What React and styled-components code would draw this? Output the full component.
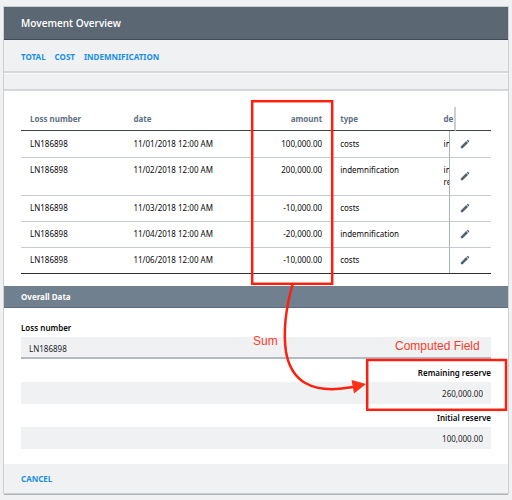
import React from "react";
import styled, { createGlobalStyle } from "styled-components";

const GlobalStyle = createGlobalStyle`
  * {
    box-sizing: border-box;
  }

  body {
    margin: 0;
    background: #f0f1f3;
    color: #08090a;
    font-family: "Noto Sans", "Open Sans", sans-serif;
    font-size: 8px;
    line-height: 12px;
  }
`;

const Page = styled.div`
  position: relative;
  padding: 7px 4px;
`;

const Card = styled.main`
  background: #ffffff;
  box-shadow: 0 0 0 1px #cdd0d3, 0 2px 0 #aeb2b5;
`;

const Header = styled.header`
  display: flex;
  align-items: center;
  height: 33px;
  padding: 0 17px;
  background: #5b6773;
  border-bottom: 1px solid #414c57;
`;

const Title = styled.h1`
  margin: 0;
  color: #ffffff;
  font-family: "Open Sans", sans-serif;
  font-size: 10px;
  font-weight: 650;
`;

const Toolbar = styled.nav`
  display: flex;
  align-items: center;
  gap: 9px;
  height: 33px;
  padding: 2px 17px 0;
  background: #f0f1f3;
  border-bottom: 2px solid #d5d8da;
`;

const Strip = styled.div`
  height: 18px;
  background: #f0f1f3;
  border-top: 1px solid #fafafa;
  border-bottom: 2px solid #d5d8da;
`;

const TextButton = styled.button`
  padding: 0;
  border: 0;
  background: none;
  color: #1a8fe3;
  font: inherit;
  font-weight: 700;
  text-transform: uppercase;
  cursor: pointer;
`;

const TableArea = styled.section`
  padding: 16px 17px 12px;
`;

const Table = styled.table`
  width: 100%;
  table-layout: fixed;
  border-collapse: separate;
  border-spacing: 0;
  border-bottom: 1px solid #2f3338;
`;

const Column = styled.col`
  width: ${(props) => props.$width};
`;

const HeadCell = styled.th`
  height: 24px;
  padding: 0 9px;
  border-bottom: 1px solid #3c4248;
  color: #5f7182;
  font-weight: 700;
  text-align: ${(props) => props.$align || "left"};
`;

const ClippedHead = styled(HeadCell)`
  padding-right: 0;
  border-right: 2px solid #cbd0d4;
  overflow: hidden;
`;

const Cell = styled.td`
  padding: 7px 9px;
  vertical-align: top;
  text-align: ${(props) => props.$align || "left"};

  tr + tr > & {
    padding-top: 6px;
    border-top: 1px solid #c5cbd1;
  }
`;

const ClippedCell = styled(Cell)`
  padding-right: 0;
  border-right: 1px solid #aab1b9;
  overflow: hidden;
  white-space: pre;
`;

const ActionCell = styled(Cell)`
  padding-left: 10px;
  padding-right: 0;
  vertical-align: middle;
`;

const EditButton = styled.button`
  display: block;
  padding: 0;
  border: 0;
  background: none;
  color: #526273;
  cursor: pointer;
`;

const SectionTitle = styled.h2`
  display: flex;
  align-items: center;
  height: 22px;
  margin: 0;
  padding: 0 17px;
  background: #70808f;
  border-bottom: 1px solid #5d6c7a;
  color: #ffffff;
  font-size: 8px;
  font-weight: 700;
`;

const Fields = styled.div`
  display: flex;
  flex-direction: column;
  gap: 8px;
  padding: 14px 17px 15px;
`;

const Field = styled.div`
  display: flex;
  flex-direction: column;
  gap: 3px;
  text-align: ${(props) => props.$align || "left"};
`;

const Label = styled.label`
  font-weight: 600;
`;

const Input = styled.input`
  width: 100%;
  height: 22px;
  padding: ${(props) => (props.$underlined ? "2px 8px 0" : "0 8px")};
  border: 0;
  border-bottom: ${(props) => (props.$underlined ? "2px solid #b3bac4" : "0")};
  border-radius: 0;
  background: #f0f1f3;
  color: #222428;
  font: inherit;
  text-align: inherit;
  outline: none;
`;

const Footer = styled.footer`
  display: flex;
  align-items: center;
  height: 29px;
  padding: 0 17px;
  background: #f0f1f3;
`;

const Annotations = styled.svg`
  position: absolute;
  top: 0;
  left: 0;
  pointer-events: none;
  font-family: "Liberation Sans", Arial, sans-serif;
  font-size: 12px;
`;

const movements = [
  { date: "11/01/2018 12:00 AM", amount: "100,000.00", type: "costs", description: "in" },
  { date: "11/02/2018 12:00 AM", amount: "200,000.00", type: "indemnification", description: "in\nre" },
  { date: "11/03/2018 12:00 AM", amount: "-10,000.00", type: "costs", description: "" },
  { date: "11/04/2018 12:00 AM", amount: "-20,000.00", type: "indemnification", description: "" },
  { date: "11/06/2018 12:00 AM", amount: "-10,000.00", type: "costs", description: "" },
];

function PencilIcon() {
  return (
    <svg width="10" height="10" viewBox="0 0 10 10" fill="currentColor" display="block">
      <path d="M0.9 9.2V7.4L6.2 2.1L8 3.9L2.7 9.2Z" />
      <path d="M6.7 1.6L7.5 0.9Q7.8 0.7 8.1 0.9L9.2 2Q9.4 2.3 9.2 2.6L8.5 3.4Z" />
    </svg>
  );
}

function MovementTable() {
  return (
    <Table>
      <colgroup>
        <Column $width="22%" />
        <Column $width="22%" />
        <Column $width="22%" />
        <Column $width="22%" />
        <Column $width="15px" />
        <Column $width="6px" />
        <Column />
      </colgroup>
      <thead>
        <tr>
          <HeadCell>Loss number</HeadCell>
          <HeadCell>date</HeadCell>
          <HeadCell $align="right">amount</HeadCell>
          <HeadCell>type</HeadCell>
          <ClippedHead colSpan={2}>de</ClippedHead>
          <HeadCell />
        </tr>
      </thead>
      <tbody>
        {movements.map((movement) => (
          <tr key={movement.date}>
            <Cell>LN186898</Cell>
            <Cell>{movement.date}</Cell>
            <Cell $align="right">{movement.amount}</Cell>
            <Cell>{movement.type}</Cell>
            <ClippedCell>{movement.description}</ClippedCell>
            <ActionCell colSpan={2}>
              <EditButton aria-label="Edit">
                <PencilIcon />
              </EditButton>
            </ActionCell>
          </tr>
        ))}
      </tbody>
    </Table>
  );
}

function App() {
  return (
    <Page>
      <GlobalStyle />
      <Card>
        <Header>
          <Title>Movement Overview</Title>
        </Header>
        <Toolbar>
          <TextButton>Total</TextButton>
          <TextButton>Cost</TextButton>
          <TextButton>Indemnification</TextButton>
        </Toolbar>
        <Strip />
        <TableArea>
          <MovementTable />
        </TableArea>
        <SectionTitle>Overall Data</SectionTitle>
        <Fields>
          <Field>
            <Label htmlFor="loss-number">Loss number</Label>
            <Input id="loss-number" defaultValue="LN186898" readOnly $underlined />
          </Field>
          <Field $align="right">
            <Label htmlFor="remaining-reserve">Remaining reserve</Label>
            <Input id="remaining-reserve" defaultValue="260,000.00" readOnly />
          </Field>
          <Field $align="right">
            <Label htmlFor="initial-reserve">Initial reserve</Label>
            <Input id="initial-reserve" defaultValue="100,000.00" readOnly />
          </Field>
        </Fields>
        <Footer>
          <TextButton>Cancel</TextButton>
        </Footer>
      </Card>
      <Annotations width="512" height="500" viewBox="0 0 512 500">
        <g fill="none" stroke="#fb2010" strokeWidth="2.5">
          <rect x="252.2" y="101.2" width="80" height="182.6" />
          <rect x="367.2" y="360" width="138.8" height="49.8" />
          <path d="M293 283C286 307 283 331 286 352C291 380 310 395 353 387" />
        </g>
        <path d="M351.5 380L366 384L354 393.5Z" fill="#fb3018" />
        <text x="253" y="345" fill="#fb3b28">Sum</text>
        <text x="395" y="350" fill="#fb3b28">Computed Field</text>
      </Annotations>
    </Page>
  );
}

export default App;
